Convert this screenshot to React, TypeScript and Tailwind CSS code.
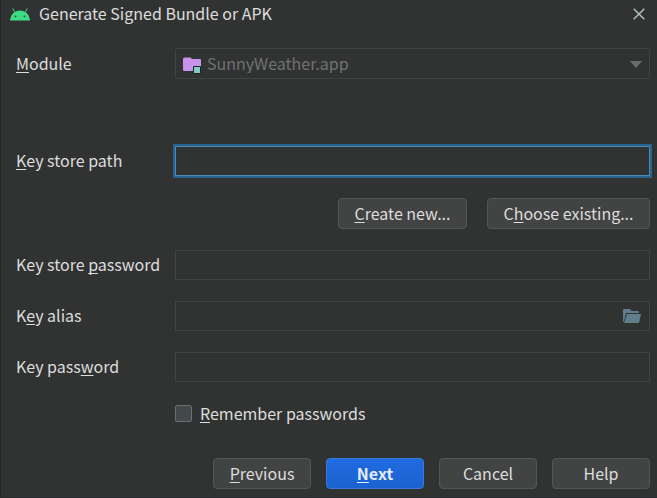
import type { ReactNode } from "react";

const fieldClass =
  "block h-[30px] w-full border border-[#424444] bg-[#313333] px-2 text-[16px] text-[#dddddd] outline-none";

function Mnemonic({ children }: { children: ReactNode }) {
  return (
    <span className="underline decoration-1 underline-offset-2 [text-decoration-skip-ink:none]">
      {children}
    </span>
  );
}

function Row({ id, label, children }: { id: string; label: ReactNode; children: ReactNode }) {
  return (
    <div className="flex items-center">
      <label htmlFor={id} className="w-[159px] shrink-0 pb-0.5">
        {label}
      </label>
      <div className="relative min-w-0 flex-1">{children}</div>
    </div>
  );
}

function Button({ children, className = "w-[98px]" }: { children: ReactNode; className?: string }) {
  return (
    <button
      type="button"
      className={`h-[31px] rounded-[4px] border border-[#545656] bg-[#424343] pb-0.5 text-[#dddddd] ${className}`}
    >
      {children}
    </button>
  );
}

function AndroidIcon() {
  return (
    <svg width="20" height="13" viewBox="0 0 20 13" aria-hidden="true">
      <path d="M4.6 4 2.9 .8M15.4 4 17.1 .8" stroke="#3ddc84" strokeWidth="1" strokeLinecap="round" />
      <path d="M0 12.5C.4 6.7 4.6 2.5 10 2.5s9.600 4.200 10 10z" fill="#3ddc84" />
      <circle cx="5.500" cy="8.500" r=".9" fill="#265b3e" />
      <circle cx="14.500" cy="8.500" r=".9" fill="#265b3e" />
    </svg>
  );
}

function ModuleIcon() {
  return (
    <svg width="19" height="17" viewBox="0 0 19 17" aria-hidden="true">
      <path d="M0 2Q0 .5 1.500.5H7q1 0 1.500 1l.5.5h8q1 0 1 1v11H1.500Q0 14 0 12.500z" fill="#c792ea" />
      <path d="M10.500 9.500h7v7h-7z" fill="#80cbc4" stroke="#1b2323" />
    </svg>
  );
}

function FolderIcon() {
  return (
    <svg width="18" height="14" viewBox="0 0 18 14" aria-hidden="true">
      <path d="M0 13V1Q0 0 1 0h6l1.500 2H15q1 0 1 1v1H3L1.500 12z" fill="#607d8b" />
      <path d="M3.500 5.500 1.500 12" stroke="#313333" />
      <path d="M4 5h14l-2 9H1z" fill="#607d8b" />
    </svg>
  );
}

export default function App() {
  return (
    <main className="min-h-screen border-b border-l border-b-[#292a2b] border-l-[#252727] bg-[#313333] font-['Noto_Sans_CJK_SC','Noto_Sans',sans-serif] text-[16px] leading-5 text-[#dddddd]">
      <header className="flex h-7 items-center gap-[9px] pr-3 pl-[9px]">
        <AndroidIcon />
        <h1 className="flex-1 pb-0.5">Generate Signed Bundle or APK</h1>
        <button type="button" aria-label="Close" className="flex h-5 w-3 items-center">
          <svg width="12" height="12" viewBox="0 0 12 12" aria-hidden="true">
            <path d="m.7.7 10.600 10.600M11.300.7.7 11.300" stroke="#afbdc4" strokeWidth="1.500" />
          </svg>
        </button>
      </header>

      <form className="pt-5 pr-[7px] pb-2 pl-[15px]">
        <Row id="module" label={<><Mnemonic>M</Mnemonic>odule</>}>
          <select
            id="module"
            disabled
            className="block h-[31px] w-full appearance-none rounded-[3px] border border-[#424444] bg-[#313333] pr-8 pb-0.5 pl-[31px] text-[#707272] opacity-100"
          >
            <option>SunnyWeather.app</option>
          </select>
          <span className="pointer-events-none absolute inset-y-0 left-2 flex items-center pt-[3px]">
            <ModuleIcon />
          </span>
          <span className="pointer-events-none absolute inset-y-0 right-2 flex items-center pt-[2px]">
            <svg width="12" height="7" viewBox="0 0 12 7" aria-hidden="true">
              <path d="M0 0h12L6 7z" fill="#6b6d6d" />
            </svg>
          </span>
        </Row>

        <div className="mt-[67px]">
          <Row id="path" label={<><Mnemonic>K</Mnemonic>ey store path</>}>
            <input
              id="path"
              type="text"
              className="block h-[30px] w-full border border-[#4a88b5] bg-[#313333] px-2 ring-2 ring-[#26648f] outline-none"
            />
          </Row>
        </div>

        <div className="mt-[22px] flex justify-end gap-5">
          <Button className="w-[129px]"><Mnemonic>C</Mnemonic>reate new...</Button>
          <Button className="w-[163px]">C<Mnemonic>h</Mnemonic>oose existing...</Button>
        </div>

        <div className="mt-[21px] flex flex-col gap-[21px]">
          <Row id="store-password" label={<>Key store <Mnemonic>p</Mnemonic>assword</>}>
            <input id="store-password" type="password" className={fieldClass} />
          </Row>
          <Row id="alias" label={<>K<Mnemonic>e</Mnemonic>y alias</>}>
            <input id="alias" type="text" className={fieldClass} />
            <button type="button" aria-label="Browse aliases" className="absolute inset-y-0 right-[9px] flex items-center">
              <FolderIcon />
            </button>
          </Row>
          <Row id="key-password" label={<>Key pass<Mnemonic>w</Mnemonic>ord</>}>
            <input id="key-password" type="password" className={fieldClass} />
          </Row>
        </div>

        <div className="mt-[21px] ml-[159px] flex items-center gap-2">
          <input
            id="remember"
            type="checkbox"
            className="size-[17px] appearance-none rounded-[2px] border border-[#6b6f70] bg-[#43494b]"
          />
          <label htmlFor="remember"><Mnemonic>R</Mnemonic>emember passwords</label>
        </div>

        <div className="mt-[35px] flex justify-end gap-[15px]">
          <Button><Mnemonic>P</Mnemonic>revious</Button>
          <button
            type="submit"
            className="h-[31px] w-[98px] rounded-[4px] border border-[#3b78dc] bg-linear-to-b from-[#206be0] to-[#1b62d0] pb-0.5 font-bold text-[#e4ecf8]"
          >
            <Mnemonic>N</Mnemonic>ext
          </button>
          <Button>Cancel</Button>
          <Button>Help</Button>
        </div>
      </form>
    </main>
  );
}
